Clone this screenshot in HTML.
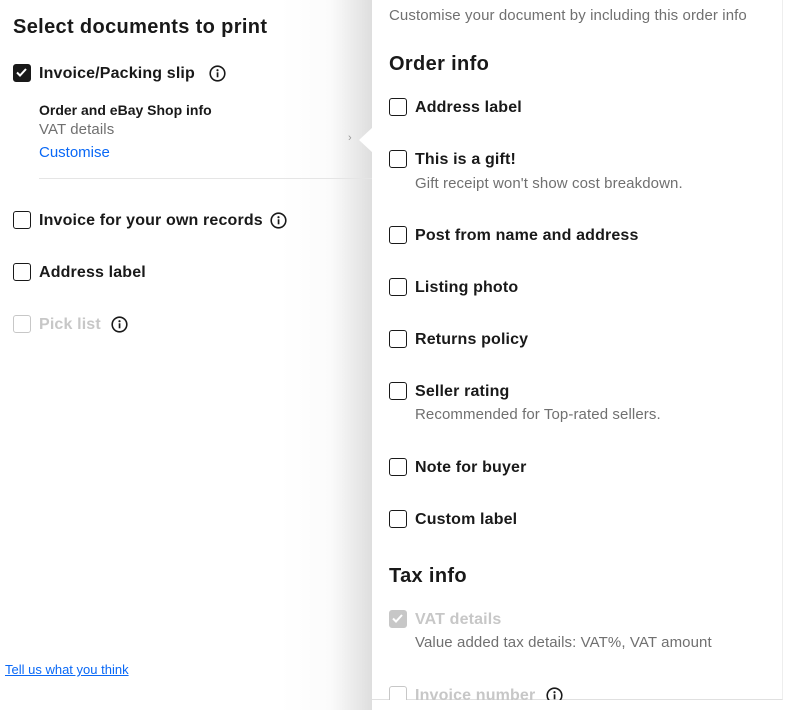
<!DOCTYPE html>
<html><head><meta charset="utf-8"><style>
*{margin:0;padding:0;box-sizing:border-box}
body{width:793px;height:710px;overflow:hidden;background:#fff;font-family:"Liberation Sans",Arial,sans-serif;color:#191919;position:relative}
.a{position:absolute;white-space:nowrap}
.cb{position:absolute;width:18px;height:18px;border:1.5px solid #191919;border-radius:3px;background:#fff}
.cb.on{background:#191919}
.cb.dis{border-color:#c7c7c7}
.cb.don{background:#c7c7c7;border-color:#c7c7c7}
.lbl{font-size:16px;font-weight:bold;line-height:20px;letter-spacing:0.15px}
.sub{font-size:15px;color:#707070;line-height:18px;letter-spacing:0.1px}
.h{font-size:20px;font-weight:bold;line-height:24px;letter-spacing:0.35px}
.info{position:absolute;width:17px;height:17px}
</style></head><body>
<div class="a" style="left:280px;top:0;width:92px;height:710px;background:linear-gradient(to right,#fff,#fbfbfb 55%,#dedede)"></div>
<div class="a" style="left:372px;top:0;width:411px;height:700px;background:#fff;border-right:1px solid #eee;border-bottom:1px solid #e0e0e0"></div>
<svg class="a" style="left:358px;top:127px" width="15" height="26"><polygon points="15,0 1,13 15,26" fill="#fff"/></svg>
<div class="a" style="left:348px;top:132px;font-size:11px;color:#999">›</div>

<div class="a h" style="left:13px;top:15px">Select documents to print</div>
<div class="cb on" style="left:13px;top:64px"><svg width="15" height="15" style="position:absolute;left:0;top:0"><path d="M3 7.5l3 3 6-6.5" stroke="#fff" stroke-width="2" fill="none"/></svg></div>
<div class="a lbl" style="left:39px;top:64px">Invoice/Packing slip</div>
<svg class="info" style="left:209px;top:65px" viewBox="0 0 17 17"><circle cx="8.5" cy="8.5" r="7.3" stroke="#191919" stroke-width="1.6" fill="none"/><rect x="7.7" y="7.3" width="1.7" height="5" fill="#191919"/><circle cx="8.5" cy="5.2" r="1.1" fill="#191919"/></svg>
<div class="a" style="left:39px;top:101px;font-size:14px;font-weight:bold;line-height:18px">Order and eBay Shop info</div>
<div class="a sub" style="left:39px;top:121px">VAT details</div>
<div class="a" style="left:39px;top:144px;font-size:15px;color:#0968f6;line-height:18px">Customise</div>
<div class="a" style="left:39px;top:178px;width:333px;height:1px;background:#e5e5e5"></div>
<div class="cb" style="left:13px;top:211px"></div>
<div class="a lbl" style="left:39px;top:211px">Invoice for your own records</div>
<svg class="info" style="left:270px;top:212px" viewBox="0 0 17 17"><circle cx="8.5" cy="8.5" r="7.3" stroke="#191919" stroke-width="1.6" fill="none"/><rect x="7.7" y="7.3" width="1.7" height="5" fill="#191919"/><circle cx="8.5" cy="5.2" r="1.1" fill="#191919"/></svg>
<div class="cb" style="left:13px;top:263px"></div>
<div class="a lbl" style="left:39px;top:263px">Address label</div>
<div class="cb dis" style="left:13px;top:315px"></div>
<div class="a lbl" style="left:39px;top:315px;color:#c7c7c7">Pick list</div>
<svg class="info" style="left:111px;top:316px" viewBox="0 0 17 17"><circle cx="8.5" cy="8.5" r="7.3" stroke="#191919" stroke-width="1.6" fill="none"/><rect x="7.7" y="7.3" width="1.7" height="5" fill="#191919"/><circle cx="8.5" cy="5.2" r="1.1" fill="#191919"/></svg>
<div class="a" style="left:5px;top:662px;font-size:13px;color:#0968f6;text-decoration:underline;line-height:15px">Tell us what you think</div>

<div class="a sub" style="left:389px;top:7px">Customise your document by including this order info</div>
<div class="a h" style="left:389px;top:52px">Order info</div>
<div class="cb" style="left:389px;top:98px"></div><div class="a lbl" style="left:415px;top:98px">Address label</div>
<div class="cb" style="left:389px;top:150px"></div><div class="a lbl" style="left:415px;top:150px">This is a gift!</div>
<div class="a sub" style="left:415px;top:175px">Gift receipt won't show cost breakdown.</div>
<div class="cb" style="left:389px;top:226px"></div><div class="a lbl" style="left:415px;top:226px">Post from name and address</div>
<div class="cb" style="left:389px;top:278px"></div><div class="a lbl" style="left:415px;top:278px">Listing photo</div>
<div class="cb" style="left:389px;top:330px"></div><div class="a lbl" style="left:415px;top:330px">Returns policy</div>
<div class="cb" style="left:389px;top:382px"></div><div class="a lbl" style="left:415px;top:382px">Seller rating</div>
<div class="a sub" style="left:415px;top:406px">Recommended for Top-rated sellers.</div>
<div class="cb" style="left:389px;top:458px"></div><div class="a lbl" style="left:415px;top:458px">Note for buyer</div>
<div class="cb" style="left:389px;top:510px"></div><div class="a lbl" style="left:415px;top:510px">Custom label</div>
<div class="a h" style="left:389px;top:564px">Tax info</div>
<div class="cb don" style="left:389px;top:610px"><svg width="15" height="15" style="position:absolute;left:0;top:0"><path d="M3 7.5l3 3 6-6.5" stroke="#fff" stroke-width="2" fill="none"/></svg></div>
<div class="a lbl" style="left:415px;top:610px;color:#c7c7c7">VAT details</div>
<div class="a sub" style="left:415px;top:634px">Value added tax details: VAT%, VAT amount</div>
<div style="position:absolute;left:372px;top:680px;width:411px;height:20px;overflow:hidden">
<div class="cb dis" style="left:17px;top:6px"></div>
<div class="a lbl" style="left:43px;top:6px;color:#c7c7c7">Invoice number</div>
<svg class="info" style="left:174px;top:7px" viewBox="0 0 17 17"><circle cx="8.5" cy="8.5" r="7.3" stroke="#191919" stroke-width="1.6" fill="none"/><rect x="7.7" y="7.3" width="1.7" height="5" fill="#191919"/><circle cx="8.5" cy="5.2" r="1.1" fill="#191919"/></svg>
</div>
</body></html>
